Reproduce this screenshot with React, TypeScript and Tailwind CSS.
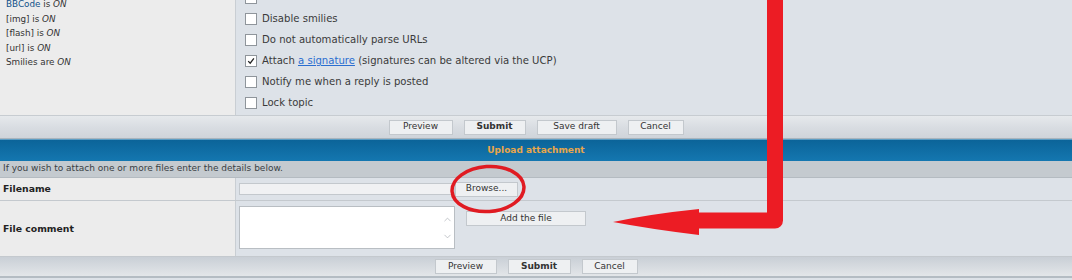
import { ChevronUp, ChevronDown } from 'lucide-react';

const Btn = ({ label, w, bold }: { label: string; w: string; bold?: boolean }) => (
  <div
    className={`${w} h-[15px] flex items-center justify-center bg-[#eef0f2] border border-[#c3c8cd] text-[9px] text-[#333] ${bold ? 'font-bold' : ''}`}
  >
    {label}
  </div>
);

const Check = ({ checked }: { checked?: boolean }) => (
  <div className="w-[12px] h-[12px] bg-white border border-[#8f959b] flex items-center justify-center">
    {checked && (
      <svg viewBox="0 0 10 10" className="w-[8px] h-[8px]">
        <path d="M1.5 5.2 L4 7.8 L8.6 1.8" fill="none" stroke="#222" strokeWidth="1.6" />
      </svg>
    )}
  </div>
);

const options = [
  { label: '' },
  { label: 'Disable smilies' },
  { label: 'Do not automatically parse URLs' },
  { label: 'sig', checked: true },
  { label: 'Notify me when a reply is posted' },
  { label: 'Lock topic' },
];

export default function App() {
  return (
    <div className="relative w-[1072px] h-[280px] overflow-hidden bg-[#dde2e8] font-['DejaVu_Sans',sans-serif] text-[#333]">
      {/* options */}
      <div className="flex h-[116px] border-b border-[#c7ccd1]">
        <div className="w-[236px] bg-[#ececec] border-r border-[#c9ced3] pl-[6px] -mt-[3px] text-[8.8px] leading-[14.5px]">
          <div>
            <span className="text-[#105289]">BBCode</span> is <i>ON</i>
          </div>
          <div>[img] is <i>ON</i></div>
          <div>[flash] is <i>ON</i></div>
          <div>[url] is <i>ON</i></div>
          <div>Smilies are <i>ON</i></div>
        </div>
        <div className="flex-1 pl-[9px] -mt-[13px] text-[10.1px] text-[#3a3a3a]">
          {options.map((o, i) => (
            <div key={i} className="h-[21px] flex items-center gap-[5px]">
              <Check checked={o.checked} />
              {o.label === 'sig' ? (
                <span>
                  Attach <span className="text-[#2a6ed0] underline">a signature</span> (signatures can be altered via the UCP)
                </span>
              ) : (
                <span>{o.label}</span>
              )}
            </div>
          ))}
        </div>
      </div>

      {/* button bar */}
      <div className="h-[23px] flex items-center justify-center gap-[11px] bg-gradient-to-b from-[#e6e9ec] via-[#d9dde2] to-[#cfd4da] border-b border-[#a9b4bd]">
        <Btn label="Preview" w="w-[64px]" />
        <Btn label="Submit" w="w-[62px]" bold />
        <Btn label="Save draft" w="w-[80px]" />
        <Btn label="Cancel" w="w-[56px]" />
      </div>

      {/* header */}
      <div className="h-[22px] flex items-center justify-center bg-gradient-to-b from-[#0b6499] to-[#1477b0] border-t border-[#5b9dc4] text-[9px] font-bold text-[#e8a64a]">
        Upload attachment
      </div>

      <div className="h-[17px] flex items-center pl-[3px] bg-[#c4cacf] border-b border-[#b4bbc1] text-[9px] text-[#3a3f44]">
        If you wish to attach one or more files enter the details below.
      </div>

      {/* filename */}
      <div className="flex h-[23px] border-b border-[#c4c9ce]">
        <div className="w-[236px] bg-[#ececec] border-r border-[#c9ced3] flex items-center pl-[3px] text-[9.3px] font-bold text-[#222]">
          Filename
        </div>
        <div className="flex-1 flex items-center pl-[3px]">
          <div className="w-[216px] h-[12px] bg-[#f0f1f3] border border-[#c3c8cd]" />
          <Btn label="Browse..." w="w-[63px]" />
        </div>
      </div>

      {/* file comment */}
      <div className="flex h-[56px] border-b border-[#c4c9ce]">
        <div className="w-[236px] bg-[#ececec] border-r border-[#c9ced3] flex items-center pl-[3px] text-[9.3px] font-bold text-[#222]">
          File comment
        </div>
        <div className="flex-1 flex items-start pl-[3px] pt-[5px] gap-[11px]">
          <div className="relative w-[216px] h-[43px] bg-white border border-[#b9bec3]">
            <div className="absolute right-[1px] top-[7px] flex flex-col items-center gap-[6px] text-[#a9aeb3]">
              <ChevronUp size={11} strokeWidth={1.5} />
              <ChevronDown size={11} strokeWidth={1.5} />
            </div>
          </div>
          <div className="mt-[5px]">
            <Btn label="Add the file" w="w-[120px]" />
          </div>
        </div>
      </div>

      {/* bottom bar */}
      <div className="h-[21px] flex items-center justify-center gap-[11px] bg-gradient-to-b from-[#c9cfd6] to-[#e3e6e9] border-b-2 border-[#b4bcc3]">
        <Btn label="Preview" w="w-[62px]" />
        <Btn label="Submit" w="w-[63px]" bold />
        <Btn label="Cancel" w="w-[56px]" />
      </div>

      {/* red annotations */}
      <svg className="absolute inset-0 pointer-events-none" width="1072" height="280" viewBox="0 0 1072 280">
        <path d="M775 -5 L775 220.5 L690 220.5" fill="none" stroke="#ec1c24" strokeWidth="16" strokeLinejoin="round" />
        <path d="M613 222 Q650 214 699 209 L699 235 Q650 229 613 222 Z" fill="#ec1c24" />
        <ellipse cx="488" cy="189" rx="36" ry="22.5" fill="none" stroke="#e01b22" strokeWidth="3.5" transform="rotate(-4 488 189)" />
      </svg>
    </div>
  );
}
